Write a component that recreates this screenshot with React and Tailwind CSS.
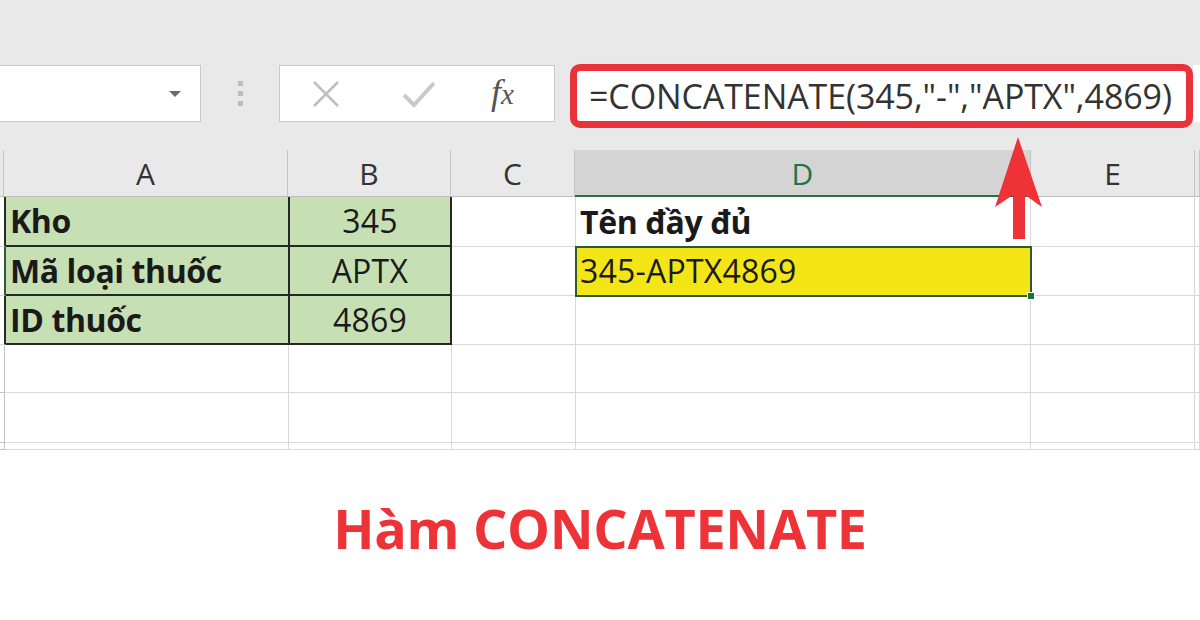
import React from 'react';

const cols = [
  { key: 'pad', w: 'w-[4px]' },
  { key: 'A', w: 'w-[284px]' },
  { key: 'B', w: 'w-[163px]' },
  { key: 'C', w: 'w-[124px]' },
  { key: 'D', w: 'w-[456px]' },
  { key: 'E', w: 'w-[164px]' },
  { key: 'F', w: 'flex-1' },
];

const rowHeights = ['h-[50px]', 'h-[49px]', 'h-[49px]', 'h-[48px]', 'h-[50px]', 'h-[7px]'];

const data = [
  { A: 'Kho', B: '345', D: 'Tên đầy đủ' },
  { A: 'Mã loại thuốc', B: 'APTX', D: '345-APTX4869' },
  { A: 'ID thuốc', B: '4869' },
  {},
  {},
  {},
];

function cellClass(r, c) {
  const green = r < 3 && (c === 'A' || c === 'B');
  if (c === 'pad') {
    if (r === 1) return 'border-r-2 border-[#2f5a3c] border-b border-b-[#d6d6d6] bg-white';
    if (r < 3) return 'border-r-2 border-[#2a2a2a] border-b border-b-[#d6d6d6] bg-white';
    return 'border-r border-b border-[#c4c4c4] bg-white';
  }
  if (green) return 'bg-[#c6e0b4] border-r-2 border-b-2 border-[#262626]';
  if (c === 'D' && r === 1)
    return 'bg-[#f4e517] border-b border-r border-[#d6d6d6] outline-2 outline-[#2b5a3a] -outline-offset-1 relative';
  return 'bg-white border-r border-b border-[#d9d9d9]';
}

function FxBar() {
  return (
    <div className="h-[150px] bg-[#e9e9e9] pt-[65px] flex items-start">
      <div className="w-[201px] h-[57px] bg-white border border-l-0 border-[#c9c9c9] flex items-center justify-end pr-[19px]">
        <div className="w-0 h-0 border-l-[6px] border-r-[6px] border-t-[6px] border-l-transparent border-r-transparent border-t-[#6b6b6b]" />
      </div>
      <div className="w-[78px] h-[57px] flex flex-col items-center justify-center gap-[5px]">
        <span className="w-[5px] h-[5px] bg-[#bdbdbd]" />
        <span className="w-[5px] h-[5px] bg-[#bdbdbd]" />
        <span className="w-[5px] h-[5px] bg-[#bdbdbd]" />
      </div>
      <div className="w-[276px] h-[57px] bg-white border border-[#c9c9c9] flex items-center">
        <svg width="30" height="30" viewBox="0 0 30 30" className="ml-[31px]">
          <path d="M3 3 L27 27 M27 3 L3 27" stroke="#bfbfbf" strokeWidth="2.5" fill="none" />
        </svg>
        <svg width="36" height="30" viewBox="0 0 36 30" className="ml-[60px]">
          <path d="M3 16 L13 26 L33 4" stroke="#c9c9c9" strokeWidth="4" fill="none" />
        </svg>
        <span className="ml-[54px] text-[36px] italic text-[#555] font-['Liberation_Serif',serif] leading-none -mt-1">
          f<span className="text-[29px]">x</span>
        </span>
      </div>
      <div className="ml-[15px] -mt-[1px] w-[623px] h-[64px] rounded-[10px] border-[7px] border-[#e8333a] bg-white flex items-center pl-[12px]">
        <span className="text-[34px] text-[#333] tracking-[-0.1px] leading-none">
          =CONCATENATE(345,"-","APTX",4869)
        </span>
      </div>
      <div className="flex-1 h-[57px] bg-white" />
    </div>
  );
}

function Sheet() {
  return (
    <div className="relative">
      <div className="flex h-[47px]">
        {cols.map((c) => (
          <div
            key={c.key}
            className={
              c.w +
              (c.key === 'D'
                ? ' bg-[#d4d4d4] border-r border-[#c4c4c4] border-b-2 border-b-[#217346] text-[#217346]'
                : ' bg-[#e9e9e9] border-r border-[#c4c4c4] border-b border-b-[#bdbdbd] text-[#333]') +
              ' flex items-center justify-center text-[30px] leading-none pt-[2px]'
            }
          >
            {c.key !== 'pad' && c.key !== 'F' ? c.key : ''}
          </div>
        ))}
      </div>
      {data.map((row, r) => (
        <div key={r} className={'flex ' + rowHeights[r]}>
          {cols.map((c) => {
            const v = row[c.key];
            return (
              <div
                key={c.key}
                className={
                  c.w +
                  ' ' +
                  cellClass(r, c.key) +
                  ' flex items-center text-[32px] leading-none text-[#1a1a1a] ' +
                  (c.key === 'B' ? 'justify-center' : 'pl-[4px]') +
                  (c.key === 'A' || (c.key === 'D' && r === 0) ? ' font-bold tracking-[-0.4px]' : ' tracking-[0.2px]')
                }
              >
                {v}
                {c.key === 'D' && r === 1 && (
                  <span className="absolute right-[-5px] bottom-[-5px] w-[8px] h-[8px] bg-[#1e6e46] border border-white" />
                )}
              </div>
            );
          })}
        </div>
      ))}
      <svg
        className="absolute left-[994px] top-[-13px]"
        width="50"
        height="104"
        viewBox="0 0 50 104"
      >
        <path d="M24 0 L48 70 L31 58 L31 102 L19 102 L19 58 L1 70 Z" fill="#ee3338" />
      </svg>
    </div>
  );
}

export default function App() {
  return (
    <div className="w-[1200px] h-[620px] bg-white overflow-hidden font-['Open_Sans',sans-serif] flex flex-col">
      <FxBar />
      <Sheet />
      <div className="flex-1 flex items-center justify-center pb-[14px]">
        <h1 className="text-[54px] font-bold text-[#ee3338] leading-none tracking-[-0.3px]">Hàm CONCATENATE</h1>
      </div>
    </div>
  );
}
